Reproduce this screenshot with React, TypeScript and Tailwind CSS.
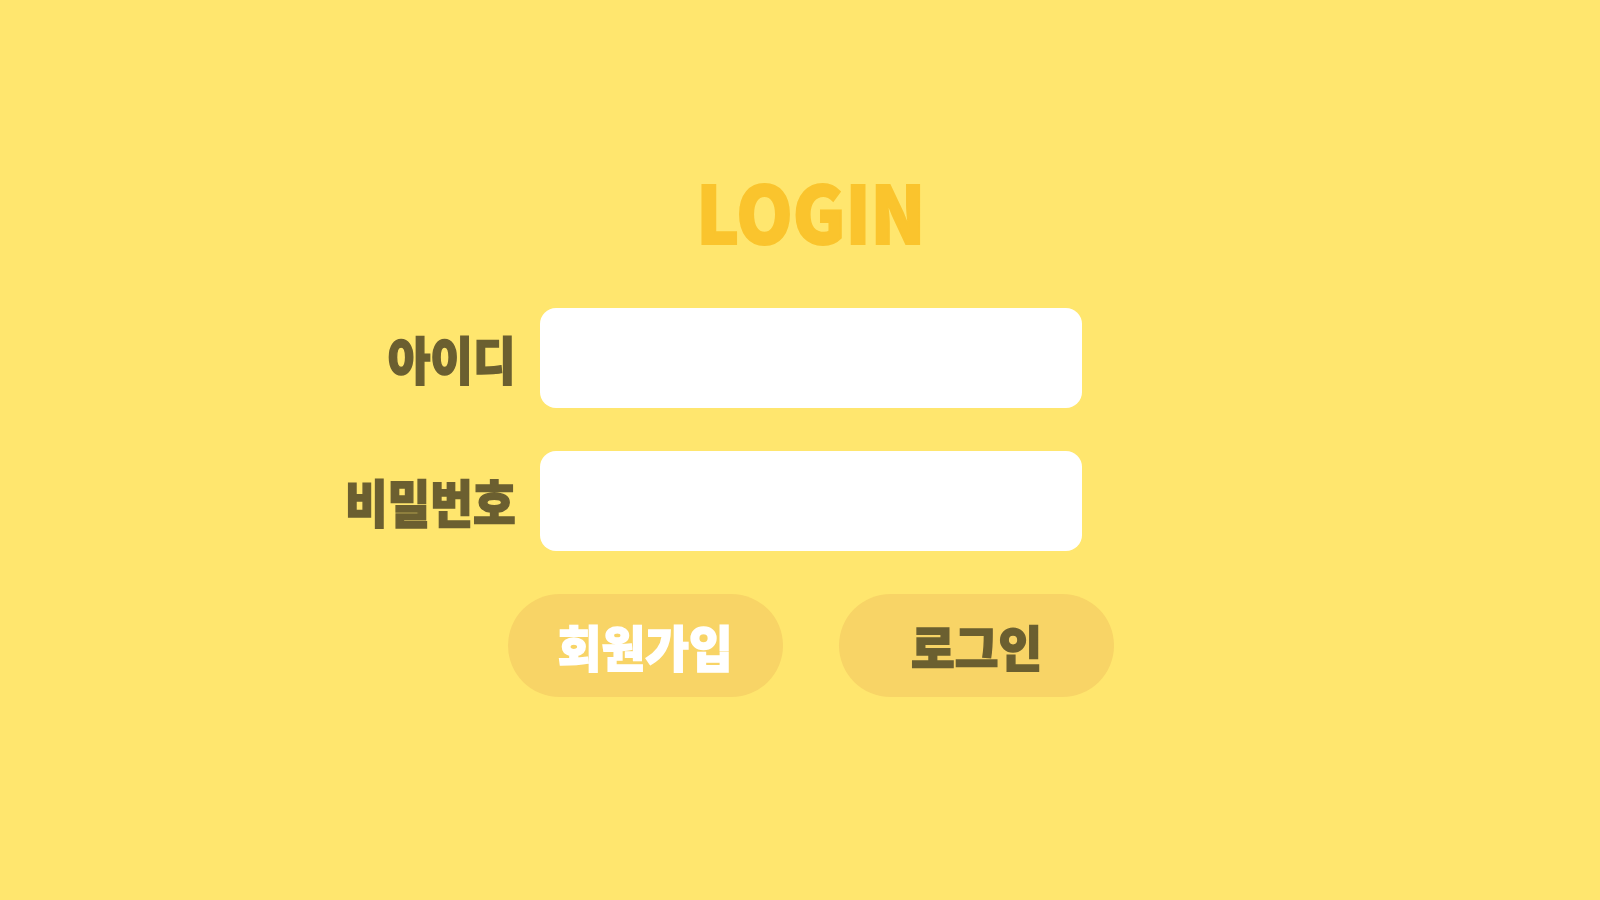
import { useState } from 'react'

const KR = { fontFamily: '"Noto Sans CJK KR", "Noto Sans", sans-serif' }

function Field({ label, type = 'text' }: { label: string; type?: string }) {
  const [value, setValue] = useState('')
  return (
    <>
      <div className="flex items-center justify-end pr-6">
        <span className="inline-block origin-right scale-x-[0.91] text-[51px] leading-none font-black text-[#6b5f30] [-webkit-text-stroke:1.5px_currentColor]">
          {label}
        </span>
      </div>
      <input
        type={type}
        value={value}
        onChange={(e) => setValue(e.target.value)}
        className="h-[100px] w-[542px] rounded-2xl border-0 bg-white px-6 text-2xl text-[#6b5f30] outline-none"
      />
      <div />
    </>
  )
}

export default function App() {
  return (
    <div className="min-h-screen w-full bg-[#ffe66e]" style={KR}>
      <div className="flex flex-col items-center pt-[170px] pl-[22px]">
        <h1 className="inline-block scale-x-[0.91] text-[79px] leading-[80px] font-black text-[#fac42d] [-webkit-text-stroke:2px_currentColor]">
          LOGIN
        </h1>
      </div>

      <div className="mt-[58px] grid grid-cols-[1fr_542px_1fr] gap-y-[43px] pl-[22px]">
        <Field label="아이디" />
        <Field label="비밀번호" type="password" />
      </div>

      <div className="mt-[43px] flex justify-center gap-[56px] pl-[22px]">
        <button className="flex h-[103px] w-[275px] items-center justify-center rounded-full bg-[#f8d466]">
          <span className="inline-block scale-x-[0.97] text-[49px] leading-none font-black text-white [-webkit-text-stroke:1.5px_currentColor]">
            회원가입
          </span>
        </button>
        <button className="flex h-[103px] w-[275px] items-center justify-center rounded-full bg-[#f8d466]">
          <span className="inline-block scale-x-[0.97] text-[49px] leading-none font-black text-[#6b5f30] [-webkit-text-stroke:1.5px_currentColor]">
            로그인
          </span>
        </button>
      </div>
    </div>
  )
}
